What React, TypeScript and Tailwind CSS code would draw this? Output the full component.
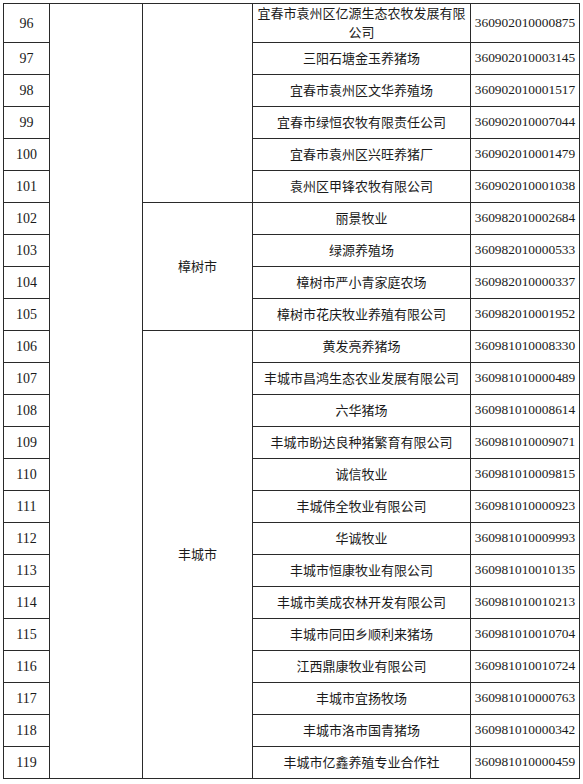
import React from "react";

type Row = {
  no: number;
  name: string;
  code: string;
};

const rows: Row[] = [
  { no: 96, name: "宜春市袁州区亿源生态农牧发展有限公司", code: "360902010000875" },
  { no: 97, name: "三阳石塘金玉养猪场", code: "360902010003145" },
  { no: 98, name: "宜春市袁州区文华养殖场", code: "360902010001517" },
  { no: 99, name: "宜春市绿恒农牧有限责任公司", code: "360902010007044" },
  { no: 100, name: "宜春市袁州区兴旺养猪厂", code: "360902010001479" },
  { no: 101, name: "袁州区甲锋农牧有限公司", code: "360902010001038" },
  { no: 102, name: "丽景牧业", code: "360982010002684" },
  { no: 103, name: "绿源养殖场", code: "360982010000533" },
  { no: 104, name: "樟树市严小青家庭农场", code: "360982010000337" },
  { no: 105, name: "樟树市花庆牧业养殖有限公司", code: "360982010001952" },
  { no: 106, name: "黄发亮养猪场", code: "360981010008330" },
  { no: 107, name: "丰城市昌鸿生态农业发展有限公司", code: "360981010000489" },
  { no: 108, name: "六华猪场", code: "360981010008614" },
  { no: 109, name: "丰城市盼达良种猪繁育有限公司", code: "360981010009071" },
  { no: 110, name: "诚信牧业", code: "360981010009815" },
  { no: 111, name: "丰城伟全牧业有限公司", code: "360981010000923" },
  { no: 112, name: "华诚牧业", code: "360981010009993" },
  { no: 113, name: "丰城市恒康牧业有限公司", code: "360981010010135" },
  { no: 114, name: "丰城市美成农林开发有限公司", code: "360981010010213" },
  { no: 115, name: "丰城市同田乡顺利来猪场", code: "360981010010704" },
  { no: 116, name: "江西鼎康牧业有限公司", code: "360981010010724" },
  { no: 117, name: "丰城市宜扬牧场", code: "360981010000763" },
  { no: 118, name: "丰城市洛市国青猪场", code: "360981010000342" },
  { no: 119, name: "丰城市亿鑫养殖专业合作社", code: "360981010000459" },
];

// county cell spans, keyed by the row number it starts on
const counties: Record<number, { label: string; span: number }> = {
  96: { label: "", span: 6 },
  102: { label: "樟树市", span: 4 },
  106: { label: "丰城市", span: 14 },
};

const cell = "border border-[#2a2a2a] text-center align-middle p-0";

export default function App() {
  return (
    <div className="bg-white min-h-screen pt-[3px] pl-[3px] font-['Liberation_Serif','Noto_Sans_CJK_SC',serif] text-[#1a1a1a]">
      <table className="border-collapse table-fixed border border-[#555] w-[576px]">
        <colgroup>
          <col className="w-[46px]" />
          <col className="w-[93px]" />
          <col className="w-[110px]" />
          <col className="w-[218px]" />
          <col className="w-[109px]" />
        </colgroup>
        <tbody>
          {rows.map((row, i) => {
            const county = counties[row.no];
            const first = i === 0;
            return (
              <tr key={row.no} className={first ? "h-[38px]" : "h-[32px]"}>
                <td className={`${cell} text-[14px]`}>{row.no}</td>
                {first && <td className={cell} rowSpan={rows.length} />}
                {county && (
                  <td className={`${cell} text-[13px]`} rowSpan={county.span}>
                    {county.label}
                  </td>
                )}
                <td className={`${cell} text-[13px] leading-[19px] px-[2px]`}>
                  {row.name}
                </td>
                <td className={`${cell} text-[13.4px]`}>{row.code}</td>
              </tr>
            );
          })}
        </tbody>
      </table>
    </div>
  );
}
